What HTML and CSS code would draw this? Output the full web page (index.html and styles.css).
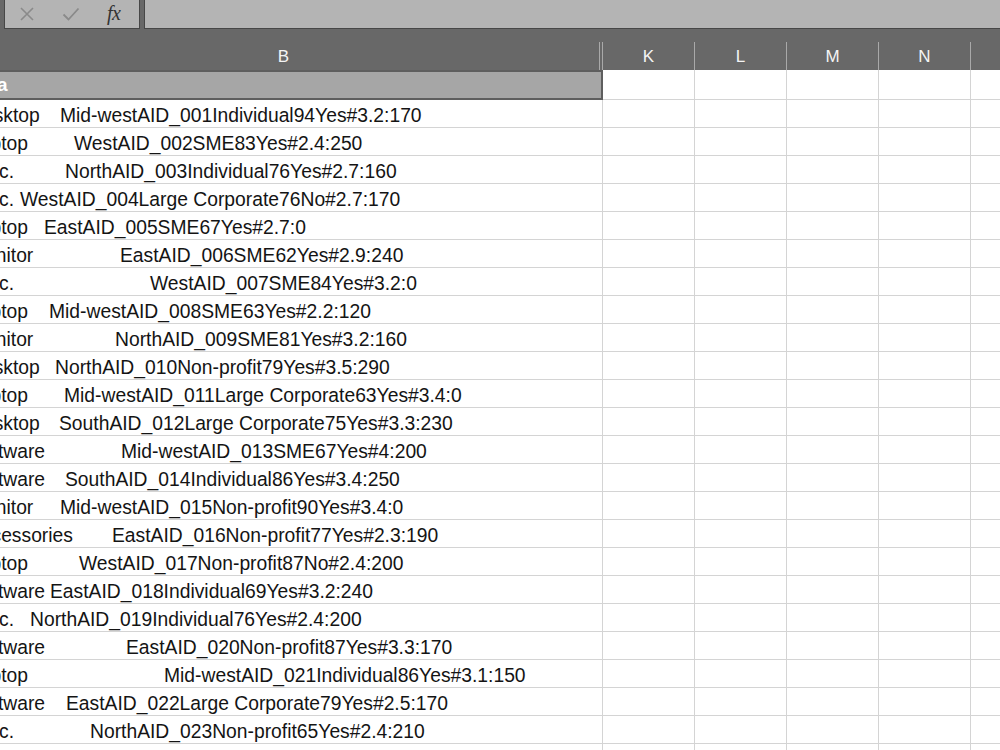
FILE: index.html
```html
<!DOCTYPE html>
<html>
<head>
<meta charset="utf-8">
<link rel="stylesheet" href="styles.css">
</head>
<body>
<div class="sheet">
  <div class="formula-bar">
    <div class="fx-box">
      <svg class="ico" width="16" height="16" viewBox="0 0 16 16"><path d="M2 2 L14 14 M14 2 L2 14" stroke="#8a8a8a" stroke-width="1.6" fill="none"/></svg>
      <svg class="ico" width="18" height="16" viewBox="0 0 18 16"><path d="M1.5 8.5 L6.5 13.5 L16.5 2.5" stroke="#8a8a8a" stroke-width="1.8" fill="none"/></svg>
      <span class="fx">fx</span>
    </div>
    <div class="input-box"></div>
  </div>
  <div class="head-area">
    <div class="col-heads">
      <div class="ch ch-b">B</div>
      <div class="ch">K</div>
      <div class="ch">L</div>
      <div class="ch">M</div>
      <div class="ch">N</div>
      <div class="ch ch-last"></div>
    </div>
  </div>
  <div class="grid">
    <div class="row row-first">
      <div class="cell cell-b selected"><span class="sel-text">a</span></div>
      <div class="cell"></div><div class="cell"></div><div class="cell"></div><div class="cell"></div><div class="cell last"></div>
    </div>
    <div id="rows"></div>
  </div>
</div>
<script src="app.js"></script>
</body>
</html>
```
FILE: styles.css
```css
* { box-sizing: border-box; }
html, body { margin: 0; padding: 0; }
body {
  width: 1000px;
  height: 750px;
  overflow: hidden;
  background: #ffffff;
  font-family: "Liberation Sans", Arial, sans-serif;
}
.sheet { width: 1000px; height: 750px; overflow: hidden; }

.formula-bar {
  height: 29px;
  background: #686868;
  display: flex;
  gap: 4px;
  padding-left: 4px;
}
.fx-box {
  width: 136px;
  height: 29px;
  background: #b4b4b4;
  border: 1px solid #474747;
  border-top: none;
  display: flex;
  align-items: center;
  padding-left: 14px;
  gap: 27px;
}
.ico { display: block; }
.fx {
  font-family: "Liberation Serif", "Times New Roman", serif;
  font-style: italic;
  font-size: 20px;
  color: #333333;
  letter-spacing: -0.5px;
  line-height: 1;
  margin-top: -3px;
}
.input-box {
  flex: 1;
  height: 29px;
  background: #b4b4b4;
  border: 1px solid #474747;
  border-top: none;
  border-right: none;
}

.head-area {
  height: 41px;
  background: #686868;
  display: flex;
  align-items: flex-end;
}
.col-heads {
  height: 28px;
  width: 100%;
  display: grid;
  grid-template-columns: 603px 92px 92px 92px 92px 1fr;
}
.ch {
  color: #f4f4f4;
  font-size: 17px;
  display: flex;
  align-items: center;
  justify-content: center;
  border-right: 1px solid #a9a9a9;
  padding-top: 1px;
}
.ch-b {
  margin-left: -35px;
  width: 638px;
  border-right: 1px solid #a9a9a9;
  position: relative;
}
.ch-b::after {
  content: "";
  position: absolute;
  right: 2px;
  top: 0;
  bottom: 0;
  width: 1px;
  background: #a9a9a9;
}
.ch-last { border-right: none; }

.grid { width: 1000px; }
.row {
  display: grid;
  grid-template-columns: 603px 92px 92px 92px 92px 1fr;
  height: 28px;
}
.row-first { height: 30px; }
.cell {
  border-right: 1px solid #d4d4d4;
  border-bottom: 1px solid #d4d4d4;
  overflow: hidden;
}
.cell.last { border-right: none; }
.cell-b {
  display: grid;
  font-size: 19.3px;
  color: #141414;
  line-height: 28px;
  white-space: nowrap;
}
.selected {
  background: #a6a6a6;
  border-top: 2px solid #5e5e5e;
  border-right: 2px solid #5e5e5e;
  border-bottom: 2px solid #5e5e5e;
  line-height: 26px;
  display: flex;
}
.sel-text {
  color: #ffffff;
  font-weight: bold;
  font-size: 19px;
  margin-left: -3px;
}
.txt {
  grid-area: 1 / 1;
  margin-left: -31px;
  padding-top: 2px;
}
.rest {
  grid-area: 1 / 1;
  padding-left: var(--x);
  padding-top: 2px;
}
```
FILE: app.js
```js
var data = [
  ["Desktop", 60, "Mid-westAID_001Individual94Yes#3.2:170"],
  ["Laptop", 74, "WestAID_002SME83Yes#2.4:250"],
  ["Misc.", 65, "NorthAID_003Individual76Yes#2.7:160"],
  ["Misc.", 20, "WestAID_004Large Corporate76No#2.7:170"],
  ["Laptop", 44, "EastAID_005SME67Yes#2.7:0"],
  ["Monitor", 120, "EastAID_006SME62Yes#2.9:240"],
  ["Misc.", 150, "WestAID_007SME84Yes#3.2:0"],
  ["Laptop", 49, "Mid-westAID_008SME63Yes#2.2:120"],
  ["Monitor", 115, "NorthAID_009SME81Yes#3.2:160"],
  ["Desktop", 55, "NorthAID_010Non-profit79Yes#3.5:290"],
  ["Laptop", 64, "Mid-westAID_011Large Corporate63Yes#3.4:0"],
  ["Desktop", 59, "SouthAID_012Large Corporate75Yes#3.3:230"],
  ["Software", 121, "Mid-westAID_013SME67Yes#4:200"],
  ["Software", 65, "SouthAID_014Individual86Yes#3.4:250"],
  ["Monitor", 60, "Mid-westAID_015Non-profit90Yes#3.4:0"],
  ["Accessories", 112, "EastAID_016Non-profit77Yes#2.3:190"],
  ["Laptop", 79, "WestAID_017Non-profit87No#2.4:200"],
  ["Software", 50, "EastAID_018Individual69Yes#3.2:240"],
  ["Misc.", 30, "NorthAID_019Individual76Yes#2.4:200"],
  ["Software", 126, "EastAID_020Non-profit87Yes#3.3:170"],
  ["Laptop", 164, "Mid-westAID_021Individual86Yes#3.1:150"],
  ["Software", 66, "EastAID_022Large Corporate79Yes#2.5:170"],
  ["Misc.", 90, "NorthAID_023Non-profit65Yes#2.4:210"],
  ["", 0, ""]
];
var host = document.getElementById("rows");
data.forEach(function (d) {
  var row = document.createElement("div");
  row.className = "row";
  var b = document.createElement("div");
  b.className = "cell cell-b";
  var t = document.createElement("span");
  t.className = "txt";
  t.textContent = d[0];
  var r = document.createElement("span");
  r.className = "rest";
  r.style.setProperty("--x", (d[1]) + "px");
  r.textContent = d[2];
  b.appendChild(t);
  b.appendChild(r);
  row.appendChild(b);
  for (var i = 0; i < 5; i++) {
    var c = document.createElement("div");
    c.className = "cell" + (i === 4 ? " last" : "");
    row.appendChild(c);
  }
  host.appendChild(row);
});
```
